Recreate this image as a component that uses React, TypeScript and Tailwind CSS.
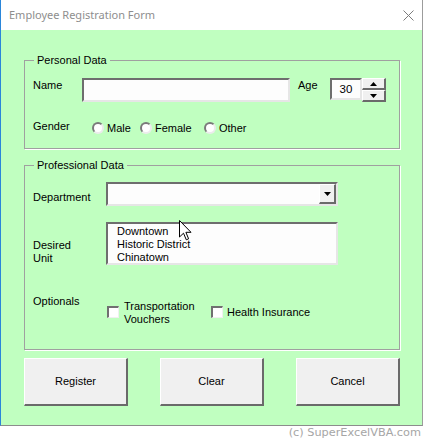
import React from "react";

const sunken =
  "bg-[#fdfdfd] border-t-2 border-l-2 border-t-[#6e6e6e] border-l-[#6e6e6e] border-b-2 border-r-2 border-b-[#e6e6e6] border-r-[#e6e6e6]";
const raised =
  "bg-[#f0f0f0] border-t border-l border-t-white border-l-white border-b-2 border-r-2 border-b-[#6a6a6a] border-r-[#6a6a6a]";

function Radio({ label, w }: { label: string; w: string }) {
  return (
    <div className={`flex items-start ${w}`}>
      <div className="mt-[2px] w-[12px] h-[12px] rounded-full bg-white border-2 border-t-[#7a7a7a] border-l-[#7a7a7a] border-b-[#ececec] border-r-[#ececec]" />
      <span className="ml-[3px] mt-[2px]">{label}</span>
    </div>
  );
}

function Check() {
  return (
    <div className="mt-[11px] w-[12px] h-[12px] bg-white border-t-2 border-l-2 border-t-[#707070] border-l-[#707070] border-b border-r border-b-[#f0f0f0] border-r-[#f0f0f0]" />
  );
}

function Arrow({ up }: { up?: boolean }) {
  return (
    <svg width="7" height="4" viewBox="0 0 7 4">
      {up ? <path d="M3.5 0 L7 4 L0 4 Z" fill="#000" /> : <path d="M0 0 L7 0 L3.5 4 Z" fill="#000" />}
    </svg>
  );
}

export default function App() {
  return (
    <div className="relative w-[423px] h-[440px] bg-white overflow-hidden font-['Liberation_Sans',Arial,sans-serif] text-[11px] leading-[13px] text-black">
      <div className="flex flex-col h-[426px] border-l border-l-[#2a86da] border-r border-r-[#9c9c9c] border-b border-b-[#8c8c8c]">
        {/* title bar */}
        <div className="h-[30px] bg-white flex items-center justify-between pl-[8px] pr-[8px]">
          <span className="font-['Noto_Sans',sans-serif] text-[11px] leading-[16px] text-[#8e8e8e]">
            Employee Registration Form
          </span>
          <svg width="11" height="11" viewBox="0 0 11 11">
            <path d="M0.5 0.5 L10.5 10.5 M10.5 0.5 L0.5 10.5" stroke="#7c7c7c" strokeWidth="1" />
          </svg>
        </div>

        {/* body */}
        <div className="h-[395px] bg-[#c0ffc0] pt-[30px] pl-[23px]">
          {/* Personal Data */}
          <div className="relative w-[376px] h-[89px] border border-[#a0a0a0] shadow-[1px_1px_0_#ffffff] pl-[8px] pt-[17px]">
            <span className="absolute -top-[7px] left-[9px] px-[3px] bg-[#c0ffc0]">Personal Data</span>
            <div className="flex items-start h-[24px]">
              <span className="w-[49px] mt-[1px]">Name</span>
              <div className={`w-[208px] h-[24px] ${sunken}`} />
              <span className="w-[32px] ml-[8px] mt-[1px]">Age</span>
              <div className={`w-[32px] h-[22px] flex items-center justify-center ${sunken}`}>
                <span className="text-[11.5px]">30</span>
              </div>
              <div className="w-[24px] h-[24px] flex flex-col">
                <div className={`h-[12px] flex items-center justify-center ${raised}`}>
                  <Arrow up />
                </div>
                <div className={`h-[12px] flex items-center justify-center ${raised}`}>
                  <Arrow />
                </div>
              </div>
            </div>
            <div className="flex items-start mt-[18px]">
              <span className="w-[59px]">Gender</span>
              <Radio label="Male" w="w-[48px]" />
              <Radio label="Female" w="w-[64px]" />
              <Radio label="Other" w="w-[60px]" />
            </div>
          </div>

          {/* Professional Data */}
          <div className="relative mt-[16px] w-[376px] h-[185px] border border-[#a0a0a0] shadow-[1px_1px_0_#ffffff] pl-[8px] pt-[16px]">
            <span className="absolute -top-[7px] left-[9px] px-[3px] bg-[#c0ffc0]">Professional Data</span>
            <div className="flex items-start">
              <span className="w-[73px] mt-[9px]">Department</span>
              <div className={`w-[232px] h-[24px] flex justify-end ${sunken}`}>
                <div className={`w-[17px] h-full flex items-center justify-center ${raised}`}>
                  <Arrow />
                </div>
              </div>
            </div>
            <div className="flex items-start mt-[16px]">
              <span className="w-[73px] mt-[17px]">
                Desired
                <br />
                Unit
              </span>
              <div className={`w-[232px] h-[43px] pl-[9px] pt-[1px] flex flex-col ${sunken}`}>
                <span>Downtown</span>
                <span>Historic District</span>
                <span>Chinatown</span>
              </div>
            </div>
            <div className="flex items-start mt-[30px]">
              <span className="w-[74px]">Optionals</span>
              <div className="w-[104px] flex items-start">
                <Check />
                <span className="ml-[5px] mt-[5px]">
                  Transportation
                  <br />
                  Vouchers
                </span>
              </div>
              <div className="flex items-start">
                <Check />
                <span className="ml-[4px] mt-[11px]">Health Insurance</span>
              </div>
            </div>
          </div>

          {/* Buttons */}
          <div className="flex gap-[32px] mt-[8px]">
            {["Register", "Clear", "Cancel"].map((b) => (
              <div
                key={b}
                className={`w-[104px] h-[48px] flex items-center justify-center ${raised} bg-[#efefec]`}
              >
                {b}
              </div>
            ))}
          </div>
        </div>
      </div>

      {/* footer */}
      <div className="h-[14px] flex items-center justify-end pr-[2px] font-['DejaVu_Sans',sans-serif] text-[11.3px] leading-[14px] text-[#a6a6a6]">
        (c) SuperExcelVBA.com
      </div>

      {/* mouse cursor overlay */}
      <svg
        className="absolute left-[179px] top-[220px]"
        width="13"
        height="21"
        viewBox="0 0 13 21"
      >
        <path
          d="M0.5 0.5 L0.5 17 L4.5 13.2 L7.3 19.8 L9.6 18.8 L6.9 12.3 L12 12.3 Z"
          fill="#fff"
          stroke="#000"
          strokeWidth="1"
          strokeLinejoin="miter"
        />
      </svg>
    </div>
  );
}
